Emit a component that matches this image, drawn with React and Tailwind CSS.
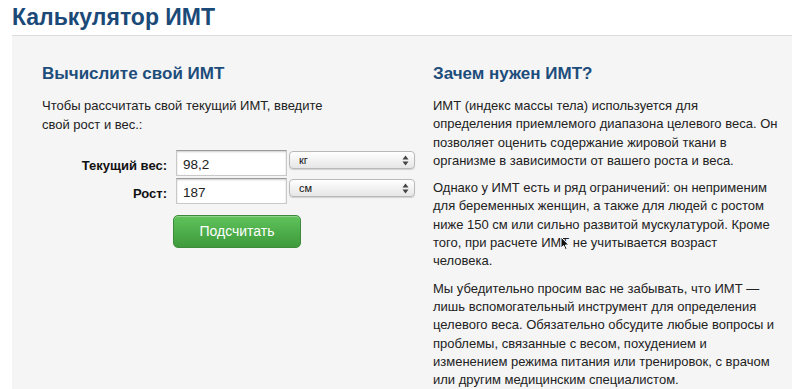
import React from 'react';

const font = { fontFamily: '"Liberation Sans", Arial, sans-serif' };

const SelectBox = ({ value }) => (
    <div className="w-[126px] h-[18px] rounded-[4px] border border-[#b9b9b9] bg-gradient-to-b from-[#ffffff] to-[#e6e6e6] shadow-[0_1px_1px_rgba(0,0,0,0.15)] flex items-center justify-between pl-[9px] pr-[5px]">
        <span className="text-[11px] text-[#111] leading-none">{value}</span>
        <svg width="7" height="11" viewBox="0 0 7 11" className="text-[#444]">
            <path d="M3.5 0.5 L6.5 4.5 L0.5 4.5 Z" fill="currentColor" />
            <path d="M3.5 10.5 L6.5 6.5 L0.5 6.5 Z" fill="currentColor" />
        </svg>
    </div>
);

const Row = ({ label, value, unit }) => (
    <div className="flex items-start">
        <label className="w-[134px] shrink-0 text-right pr-[9px] pt-[6px] text-[13px] font-bold text-[#111]">{label}</label>
        <div className="w-[111px] h-[26px] shrink-0 bg-white border border-[#c8c8c8] border-t-[#9a9a9a] shadow-[inset_0_1px_2px_rgba(0,0,0,0.2)] px-[6px] pt-[7px] text-[13.5px] leading-none text-[#222]">
            {value}
        </div>
        <div className="ml-[2px] pt-[1px] shrink-0">
            <SelectBox value={unit} />
        </div>
    </div>
);

export default function App() {
    return (
        <div className="w-[800px] h-[389px] bg-white overflow-hidden relative" style={font}>
            {/* Page title */}
            <h1 className="pl-[12px] pt-[4px] h-[35px] text-[23px] font-bold text-[#1b4a78] leading-[27px]">
                Калькулятор ИМТ
            </h1>

            {/* Grey panel */}
            <div className="ml-[12px] w-[780px] h-[360px] bg-[#f5f5f5] border-t border-[#dcdcdc] flex pl-[30px] pt-[27px]">
                {/* Calculator column */}
                <div className="w-[360px] shrink-0">
                    <h2 className="text-[17px] font-bold text-[#1d4d7b] leading-[22px]">Вычислите свой ИМТ</h2>
                    <p className="mt-[11px] w-[300px] text-[13px] leading-[19px] text-[#222]">
                        Чтобы рассчитать свой текущий ИМТ, введите свой рост и вес.:
                    </p>
                    <div className="mt-[16px] flex flex-col gap-[2px]">
                        <Row label="Текущий вес:" value="98,2" unit="кг" />
                        <Row label="Рост:" value="187" unit="см" />
                    </div>
                    <button className="ml-[131px] mt-[11px] w-[128px] h-[33px] rounded-[5px] border border-[#3d8b3a] bg-gradient-to-b from-[#5fc35c] to-[#3e9a3b] text-white text-[14px] shadow-[inset_0_1px_0_rgba(255,255,255,0.3)]">
                        Подсчитать
                    </button>
                </div>

                {/* Info column */}
                <div className="ml-[31px] w-[345px] shrink-0 text-[13px] leading-[18.3px] text-[#222]">
                    <h2 className="text-[17px] font-bold text-[#1d4d7b] leading-[22px]">Зачем нужен ИМТ?</h2>
                    <p className="mt-[12px]">
                        ИМТ (индекс массы тела) используется для определения приемлемого диапазона целевого веса. Он позволяет оценить содержание жировой ткани в организме в зависимости от вашего роста и веса.
                    </p>
                    <p className="mt-[9px]">
                        Однако у ИМТ есть и ряд ограничений: он неприменим для беременных женщин, а также для людей с ростом ниже 150 см или сильно развитой мускулатурой. Кроме того, при расчете ИМТ не учитывается возраст человека.
                    </p>
                    <p className="mt-[9px]">
                        Мы убедительно просим вас не забывать, что ИМТ — лишь вспомогательный инструмент для определения целевого веса. Обязательно обсудите любые вопросы и проблемы, связанные с весом, похудением и изменением режима питания или тренировок, с врачом или другим медицинским специалистом.
                    </p>
                </div>
            </div>

            {/* Mouse pointer */}
            <svg className="absolute left-[560px] top-[236px]" width="10" height="15" viewBox="0 0 10 15">
                <path d="M1 1 L1 12 L3.6 9.6 L5.6 14 L7.2 13.3 L5.3 9 L8.8 9 Z" fill="#111" stroke="#fff" strokeWidth="1" />
            </svg>
        </div>
    );
}
